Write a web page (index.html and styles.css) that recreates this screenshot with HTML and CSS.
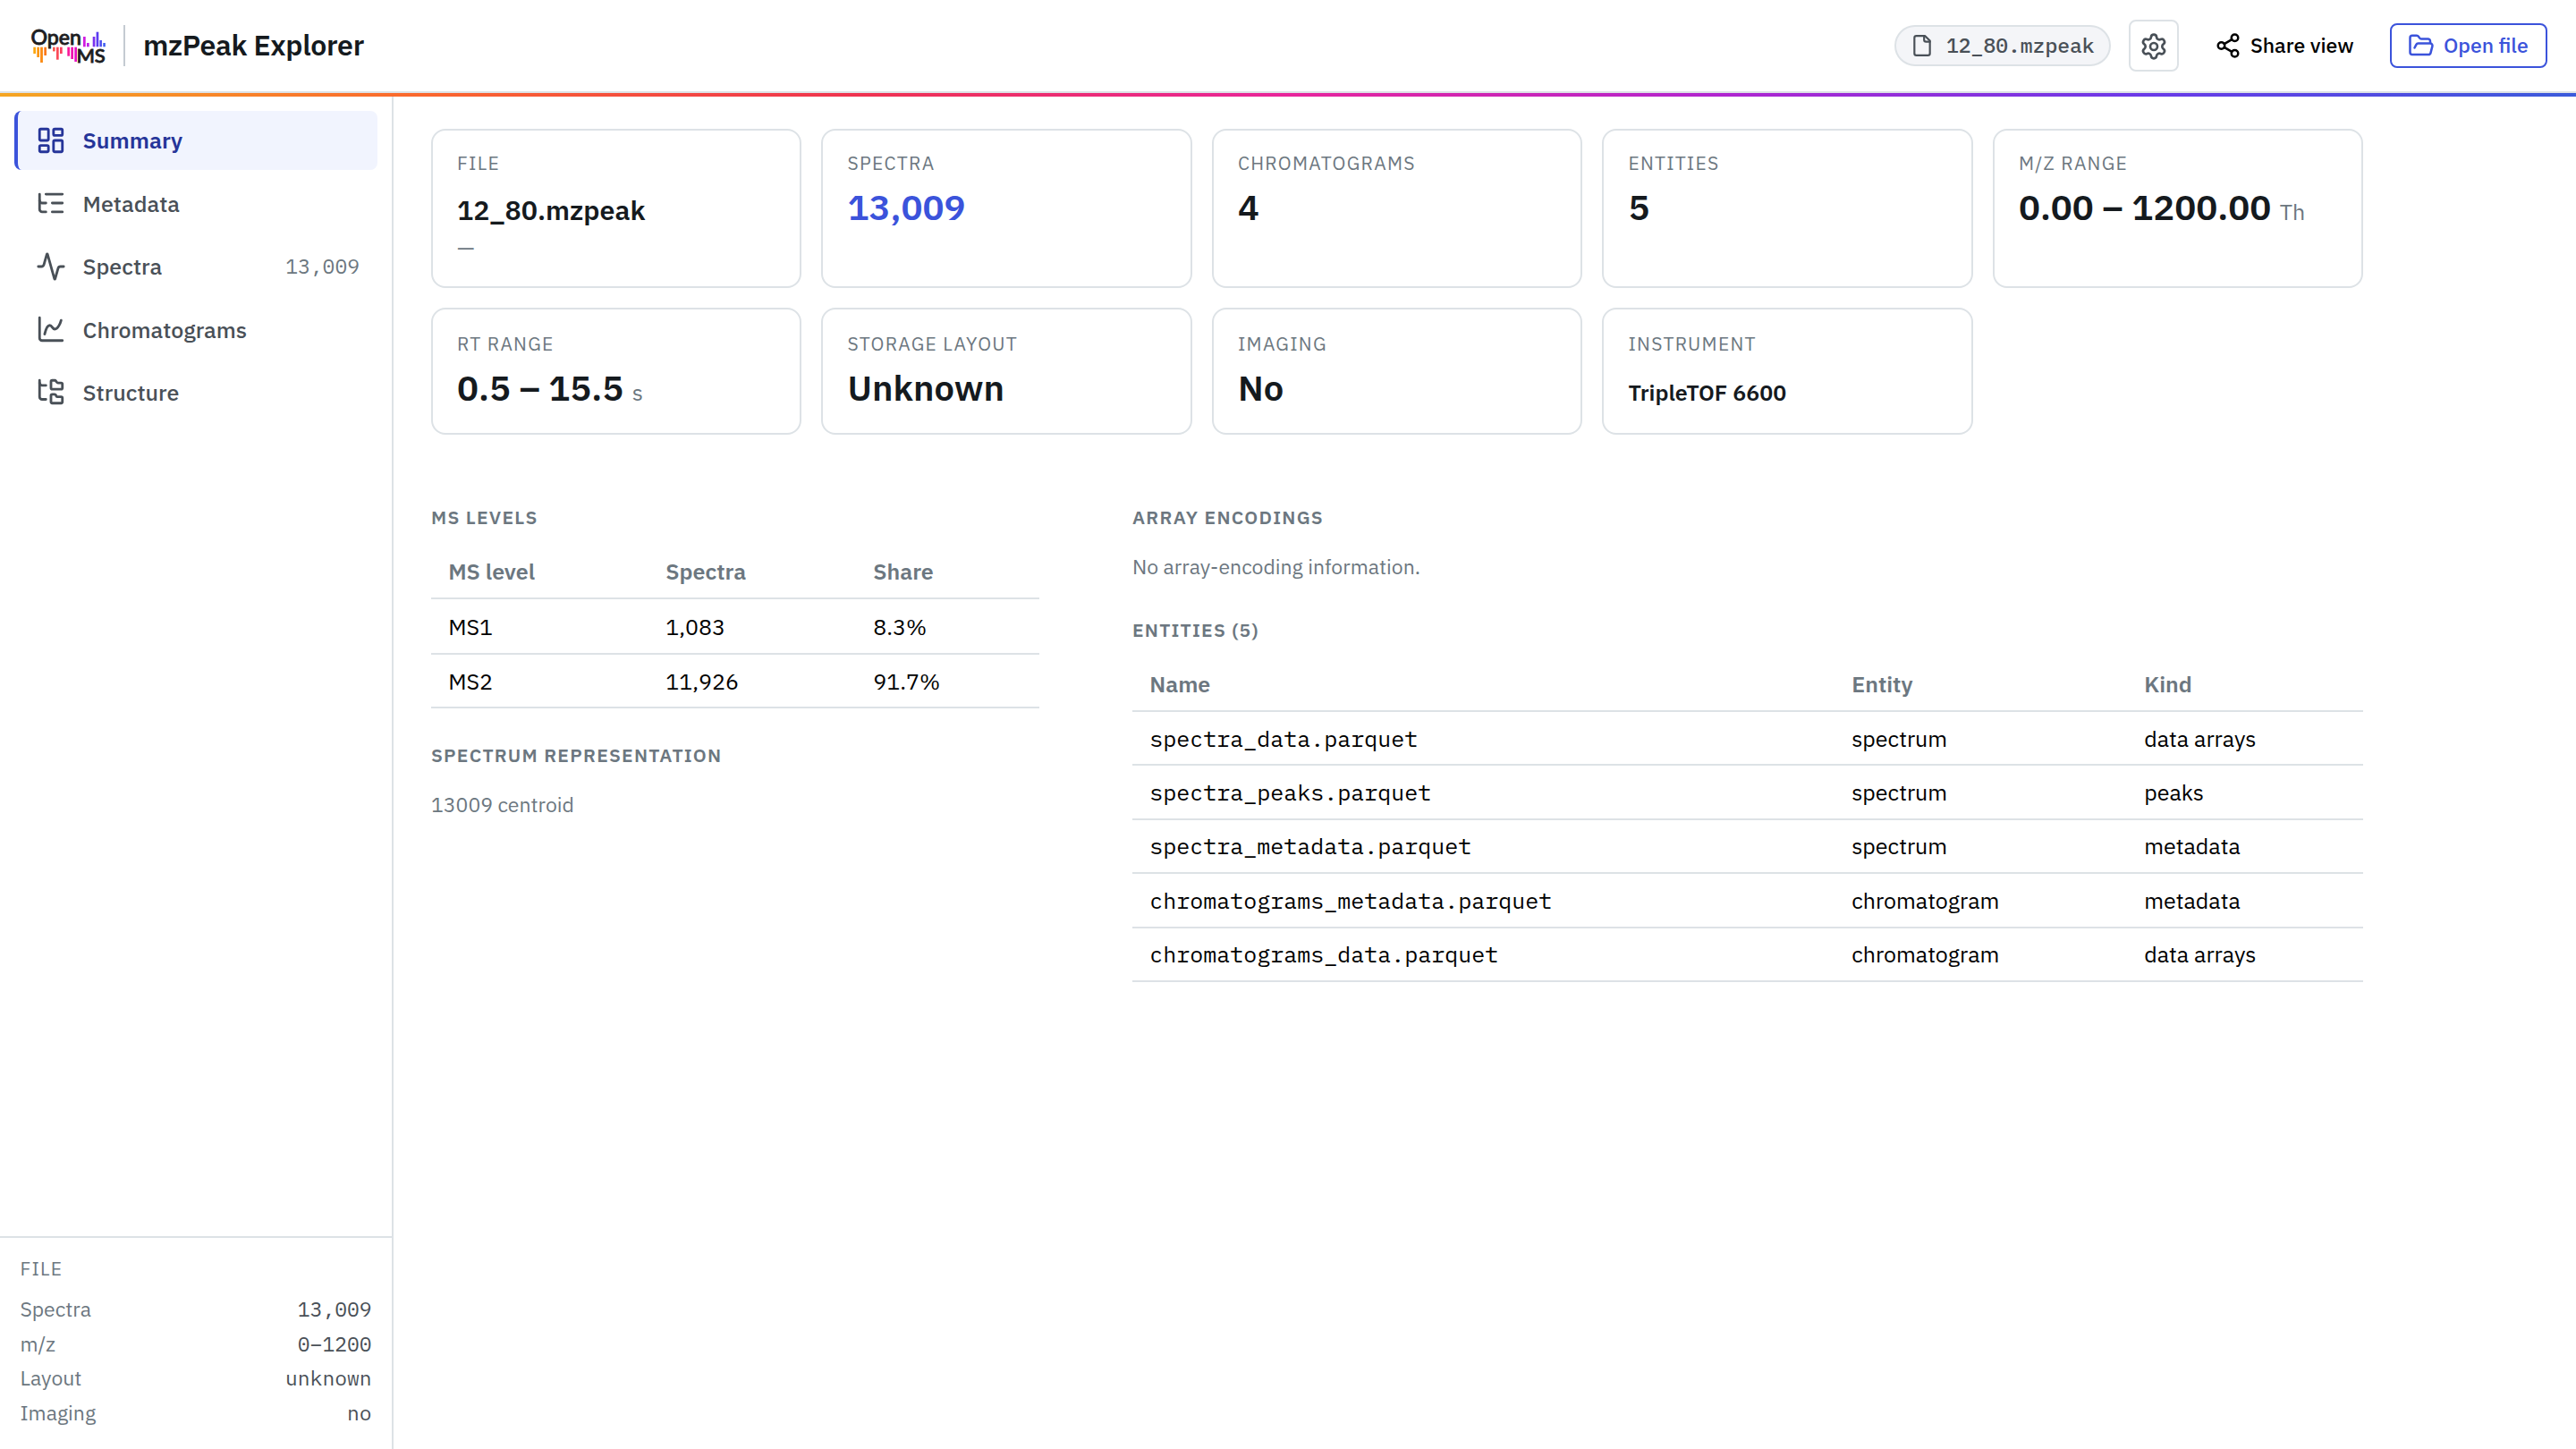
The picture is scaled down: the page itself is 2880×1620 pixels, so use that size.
FILE: index.html
```html
<!DOCTYPE html>
<html lang="en">
<head>
    <meta charset="UTF-8">
    <title>mzPeak Explorer</title>
    <link rel="stylesheet" href="styles.css">
</head>
<body>
    <header class="topbar">
        <svg class="logo" viewBox="0 0 92 48" role="img" aria-label="OpenMS">
            <text x="3.4" y="21.3" font-size="22.5" textLength="56.5" lengthAdjust="spacingAndGlyphs">Open</text>
            <text x="54.4" y="41.3" font-size="20.5" textLength="32.4" lengthAdjust="spacingAndGlyphs">MS</text>
            <!-- peaks above -->
            <g>
                <rect x="62" y="12" width="2.7" height="11.3" fill="#d01be0"/>
                <rect x="66" y="19" width="2.7" height="4.3" fill="#bd20e8"/>
                <rect x="72.7" y="12" width="2.7" height="11.3" fill="#7a30ee"/>
                <rect x="76.6" y="6.7" width="2.7" height="16.6" fill="#5a3df0"/>
                <rect x="80.4" y="16" width="2.5" height="7.3" fill="#4a4cf0"/>
                <rect x="84.3" y="19" width="2.5" height="4.3" fill="#3b5cf0"/>
            </g>
            <!-- mirrored peaks below -->
            <g>
                <rect x="6.3" y="23.7" width="2.7" height="7.3" fill="#fba60c"/>
                <rect x="10.3" y="23.7" width="2.7" height="11.3" fill="#fb960f"/>
                <rect x="14.1" y="23.7" width="2.8" height="17.3" fill="#fb8a12"/>
                <rect x="18.3" y="23.7" width="2.7" height="9.3" fill="#fa7a1c"/>
                <rect x="28" y="23.7" width="2.7" height="4.7" fill="#fb5a50"/>
                <rect x="32" y="23.7" width="2.7" height="14" fill="#fb4a58"/>
                <rect x="36" y="23.7" width="2.7" height="7.3" fill="#fb3e60"/>
                <rect x="44.3" y="23.7" width="2.7" height="10" fill="#f91a9c"/>
                <rect x="48.3" y="23.7" width="2.7" height="13.3" fill="#f010b0"/>
                <rect x="52.3" y="23.7" width="2.7" height="16.3" fill="#e80fc4"/>
            </g>
        </svg>
        <span class="divider"></span>
        <h1>mzPeak Explorer</h1>

        <div class="actions">
            <span class="file-pill">
                <svg class="icon" viewBox="0 0 24 24"><path d="M15 2H6a2 2 0 0 0-2 2v16a2 2 0 0 0 2 2h12a2 2 0 0 0 2-2V7Z"/><path d="M14 2v4a2 2 0 0 0 2 2h4"/></svg>
                <span>12_80.mzpeak</span>
            </span>
            <button class="btn btn-settings" aria-label="Settings">
                <svg class="icon" viewBox="0 0 24 24"><path d="M9.671 4.136a2.34 2.34 0 0 1 4.659 0 2.34 2.34 0 0 0 3.319 1.915 2.34 2.34 0 0 1 2.33 4.033 2.34 2.34 0 0 0 0 3.831 2.34 2.34 0 0 1-2.33 4.033 2.34 2.34 0 0 0-3.319 1.915 2.34 2.34 0 0 1-4.659 0 2.34 2.34 0 0 0-3.32-1.915 2.34 2.34 0 0 1-2.33-4.033 2.34 2.34 0 0 0 0-3.831A2.34 2.34 0 0 1 6.35 6.051a2.34 2.34 0 0 0 3.319-1.915"/><circle cx="12" cy="12" r="3"/></svg>
            </button>
            <button class="btn btn-share">
                <svg class="icon" viewBox="0 0 24 24"><circle cx="18" cy="5" r="3"/><circle cx="6" cy="12" r="3"/><circle cx="18" cy="19" r="3"/><path d="m8.59 13.51 6.83 3.98M15.41 6.51l-6.82 3.98"/></svg>
                <span>Share view</span>
            </button>
            <button class="btn btn-open">
                <svg class="icon" viewBox="0 0 24 24"><path d="m6 14 1.5-2.9A2 2 0 0 1 9.24 10H20a2 2 0 0 1 1.94 2.5l-1.54 6a2 2 0 0 1-1.95 1.5H4a2 2 0 0 1-2-2V5a2 2 0 0 1 2-2h3.9a2 2 0 0 1 1.69.9l.81 1.2a2 2 0 0 0 1.67.9H18a2 2 0 0 1 2 2v2"/></svg>
                <span>Open file</span>
            </button>
        </div>
    </header>
    <div class="rainbow"></div>

    <div class="layout">
        <aside class="sidebar">
            <nav>
                <a class="nav-item active">
                    <svg class="icon" viewBox="0 0 24 24"><rect width="7" height="9" x="3" y="3" rx="1"/><rect width="7" height="5" x="14" y="3" rx="1"/><rect width="7" height="9" x="14" y="12" rx="1"/><rect width="7" height="5" x="3" y="16" rx="1"/></svg>
                    <span>Summary</span>
                </a>
                <a class="nav-item">
                    <svg class="icon" viewBox="0 0 24 24"><path d="M8 5h13M13 12h8M13 19h8M3 10a2 2 0 0 0 2 2h3"/><path d="M3 5v12a2 2 0 0 0 2 2h3"/></svg>
                    <span>Metadata</span>
                </a>
                <a class="nav-item">
                    <svg class="icon" viewBox="0 0 24 24"><path d="M22 12h-2.48a2 2 0 0 0-1.93 1.46l-2.35 8.36a.25.25 0 0 1-.48 0L9.24 2.18a.25.25 0 0 0-.48 0l-2.35 8.36A2 2 0 0 1 4.49 12H2"/></svg>
                    <span>Spectra</span>
                    <span class="count">13,009</span>
                </a>
                <a class="nav-item">
                    <svg class="icon" viewBox="0 0 24 24"><path d="M3 3v16a2 2 0 0 0 2 2h16"/><path d="M7 16c.5-2 1.5-7 4-7 2 0 2 3 4 3 2.5 0 4.5-5 5-7"/></svg>
                    <span>Chromatograms</span>
                </a>
                <a class="nav-item">
                    <svg class="icon" viewBox="0 0 24 24"><path d="M20 10a1 1 0 0 0 1-1V6a1 1 0 0 0-1-1h-2.5a1 1 0 0 1-.8-.4l-.9-1.2A1 1 0 0 0 15 3h-2a1 1 0 0 0-1 1v5a1 1 0 0 0 1 1Z"/><path d="M20 21a1 1 0 0 0 1-1v-3a1 1 0 0 0-1-1h-2.9a1 1 0 0 1-.88-.55l-.42-.85a1 1 0 0 0-.92-.6H13a1 1 0 0 0-1 1v5a1 1 0 0 0 1 1Z"/><path d="M3 5a2 2 0 0 0 2 2h3"/><path d="M3 3v13a2 2 0 0 0 2 2h3"/></svg>
                    <span>Structure</span>
                </a>
            </nav>
            <div class="file-info">
                <div class="label">File</div>
                <dl>
                    <div><dt>Spectra</dt><dd>13,009</dd></div>
                    <div><dt>m/z</dt><dd>0–1200</dd></div>
                    <div><dt>Layout</dt><dd>unknown</dd></div>
                    <div><dt>Imaging</dt><dd>no</dd></div>
                </dl>
            </div>
        </aside>

        <main>
            <div class="cards">
                <div class="card">
                    <div class="label">File</div>
                    <div class="value"><span class="name">12_80.mzpeak</span></div>
                    <div class="sub">—</div>
                </div>
                <div class="card">
                    <div class="label">Spectra</div>
                    <div class="value accent">13,009</div>
                </div>
                <div class="card">
                    <div class="label">Chromatograms</div>
                    <div class="value">4</div>
                </div>
                <div class="card">
                    <div class="label">Entities</div>
                    <div class="value">5</div>
                </div>
                <div class="card">
                    <div class="label">m/z range</div>
                    <div class="value">0.00 – 1200.00 <span class="unit">Th</span></div>
                </div>
                <div class="card">
                    <div class="label">RT range</div>
                    <div class="value">0.5 – 15.5 <span class="unit">s</span></div>
                </div>
                <div class="card">
                    <div class="label">Storage layout</div>
                    <div class="value">Unknown</div>
                </div>
                <div class="card">
                    <div class="label">Imaging</div>
                    <div class="value">No</div>
                </div>
                <div class="card">
                    <div class="label">Instrument</div>
                    <div class="value"><span class="instrument">TripleTOF 6600</span></div>
                </div>
            </div>

            <div class="columns">
                <section>
                    <h2>MS levels</h2>
                    <table class="levels">
                        <thead>
                            <tr><th>MS level</th><th>Spectra</th><th>Share</th></tr>
                        </thead>
                        <tbody>
                            <tr><td>MS1</td><td>1,083</td><td>8.3%</td></tr>
                            <tr><td>MS2</td><td>11,926</td><td>91.7%</td></tr>
                        </tbody>
                    </table>
                    <h2>Spectrum representation</h2>
                    <p>13009 centroid</p>
                </section>
                <section>
                    <h2>Array encodings</h2>
                    <p>No array-encoding information.</p>
                    <h2>Entities (5)</h2>
                    <table class="entities">
                        <thead>
                            <tr><th>Name</th><th>Entity</th><th>Kind</th></tr>
                        </thead>
                        <tbody>
                            <tr><td>spectra_data.parquet</td><td>spectrum</td><td>data arrays</td></tr>
                            <tr><td>spectra_peaks.parquet</td><td>spectrum</td><td>peaks</td></tr>
                            <tr><td>spectra_metadata.parquet</td><td>spectrum</td><td>metadata</td></tr>
                            <tr><td>chromatograms_metadata.parquet</td><td>chromatogram</td><td>metadata</td></tr>
                            <tr><td>chromatograms_data.parquet</td><td>chromatogram</td><td>data arrays</td></tr>
                        </tbody>
                    </table>
                </section>
            </div>
        </main>
    </div>
</body>
</html>
```
FILE: styles.css
```css
:root {
    --sans: "IBM Plex Sans", Roboto, "Liberation Sans", sans-serif;
    --mono: "IBM Plex Mono", "Liberation Mono", monospace;
    --border: #dde2e6;
    --muted: #6c7780;
    --text: #495057;
    --ink: #151a1e;
    --blue: #3b53db;
}
* {
    box-sizing: border-box;
}
body {
    margin: 0;
    height: 100vh;
    display: flex;
    flex-direction: column;
    font-family: var(--sans);
    font-size: 25px;
    color: #000;
    background: #fff;
    overflow: hidden;
}
.icon {
    flex: none;
    fill: none;
    stroke: currentColor;
    stroke-width: 2;
    stroke-linecap: round;
    stroke-linejoin: round;
}

/* Header */
.topbar {
    display: flex;
    align-items: center;
    height: 104px;
    padding: 0 32px 0 31px;
    border-bottom: 2px solid var(--border);
}
.logo {
    width: 92px;
    height: 48px;
    margin-top: 4px;
    overflow: visible;
}
.logo text {
    font-family: Lato, sans-serif;
    font-weight: 500;
    fill: #1d1d1f;
    stroke: #1d1d1f;
    stroke-width: 0.8;
}
.divider {
    width: 2px;
    height: 46px;
    margin: 0 20px 0 15px;
    background: #c4cbd2;
}
h1 {
    margin: 0;
    padding-bottom: 2px;
    font-size: 32px;
    font-weight: 600;
    letter-spacing: -0.01em;
    line-height: 40px;
    color: var(--ink);
}
.actions {
    display: flex;
    align-items: center;
    gap: 20px;
    margin-left: auto;
}
.file-pill {
    display: flex;
    align-items: center;
    gap: 14px;
    width: 242px;
    height: 46px;
    padding-left: 16px;
    border: 2px solid var(--border);
    border-radius: 23px;
    background: #f4f5f8;
    color: var(--text);
    font-family: var(--mono);
    font-size: 23px;
    font-weight: 500;
    line-height: 30px;
}
.file-pill .icon {
    width: 26px;
    height: 26px;
}
.file-pill span,
.btn span {
    padding-bottom: 3px;
}
.btn {
    display: flex;
    align-items: center;
    gap: 10px;
    padding: 0 18px;
    border: 2px solid transparent;
    border-radius: 8px;
    background: #fff;
    color: #000;
    font-family: var(--sans);
    font-size: 23px;
    font-weight: 500;
    line-height: 30px;
    white-space: nowrap;
}
.btn .icon {
    width: 30px;
    height: 30px;
}
.btn-settings {
    justify-content: center;
    width: 56px;
    height: 58px;
    padding: 2px 0 0;
    border-color: var(--border);
    color: var(--text);
}
.btn-settings .icon {
    width: 32px;
    height: 32px;
}
.btn-share {
    width: 196px;
    height: 50px;
}
.btn-open {
    width: 176px;
    height: 50px;
    border-color: var(--blue);
    color: var(--blue);
}
.rainbow {
    flex: none;
    height: 4px;
    background: linear-gradient(90deg, #f5a623, #fa662e 16.6%, #ef3350 33.3%, #e8259b 50%, #b125cf 66.6%, #6a3ae8 83.3%, #3b5bdb);
}

/* Sidebar */
.layout {
    flex: 1;
    display: flex;
    min-height: 0;
}
.sidebar {
    display: flex;
    flex-direction: column;
    justify-content: space-between;
    width: 440px;
    border-right: 2px solid var(--border);
}
nav {
    display: flex;
    flex-direction: column;
    gap: 4px;
    padding: 16px;
}
.nav-item {
    display: flex;
    align-items: center;
    gap: 18.6px;
    height: 66.3px;
    padding: 0 20px;
    border-left: 4px solid transparent;
    border-radius: 8px;
    color: var(--text);
    font-weight: 500;
}
.nav-item .icon {
    width: 34px;
    height: 34px;
}
.nav-item.active {
    border-left-color: var(--blue);
    background: #f1f4fe;
    color: #263599;
    font-weight: 600;
}
.nav-item.active span {
    padding-bottom: 2px;
}
.count {
    margin-left: auto;
    padding-bottom: 2px;
    color: var(--muted);
    font-family: var(--mono);
    font-size: 23px;
    font-weight: 400;
}
.label {
    color: var(--muted);
    font-size: 21px;
    letter-spacing: 0.06em;
    line-height: 32px;
    text-transform: uppercase;
}
.file-info {
    padding: 18px 22.4px 21.6px;
    border-top: 2px solid var(--border);
}
dl {
    margin: 10px 0 0;
}
dl div {
    display: flex;
    justify-content: space-between;
    font-size: 23px;
    line-height: 38.6px;
}
dt {
    color: var(--muted);
}
dd {
    margin: 0;
    color: var(--text);
    font-family: var(--mono);
}

/* Summary cards */
main {
    width: 2244px;
    padding: 36px 42px;
}
.cards {
    display: grid;
    grid-template-columns: repeat(5, 1fr);
    grid-template-rows: 178px 142px;
    gap: 22px 22.4px;
}
.card {
    padding: 20px 27px;
    border: 2px solid var(--border);
    border-radius: 16px;
}
.card:nth-child(n+6) {
    padding-top: 22px;
}
.value {
    margin-top: 3px;
    color: var(--ink);
    font-size: 40px;
    font-weight: 600;
    line-height: 60px;
    white-space: nowrap;
}
.value.accent {
    color: var(--blue);
}
.name {
    font-size: 30.4px;
}
.instrument {
    font-size: 25px;
}
.unit {
    color: var(--muted);
    font-size: 25px;
    font-weight: 400;
}
.sub {
    margin-top: -3px;
    color: var(--muted);
    font-size: 25px;
    line-height: 30px;
}

/* Tables */
.columns {
    display: grid;
    grid-template-columns: 680px 1376px;
    gap: 104px;
    margin-top: 76px;
}
h2 {
    margin: 0 0 15px;
    color: var(--muted);
    font-size: 21px;
    font-weight: 600;
    letter-spacing: 0.06em;
    line-height: 32px;
    text-transform: uppercase;
}
p {
    margin: 22px 0 38px;
    color: var(--muted);
    font-size: 23px;
    line-height: 34px;
}
table {
    width: 100%;
    margin-bottom: 36px;
    border-spacing: 0;
    table-layout: fixed;
}
th, td {
    height: 61px;
    padding: 0 0 0 19.2px;
    border-bottom: 2px solid var(--border);
    text-align: left;
}
th {
    color: var(--muted);
    font-weight: 600;
}
.levels th:first-child {
    width: 243px;
}
.levels th:nth-child(2) {
    width: 232px;
}
.levels tr:first-child td {
    height: 62px;
    padding-top: 1px;
}
.levels tr:last-child td {
    height: 60px;
}
.entities th:first-child {
    width: 785px;
}
.entities th:nth-child(2) {
    width: 327px;
}
.entities td {
    height: 60.4px;
}
.entities td:first-child {
    font-family: var(--mono);
}
```
